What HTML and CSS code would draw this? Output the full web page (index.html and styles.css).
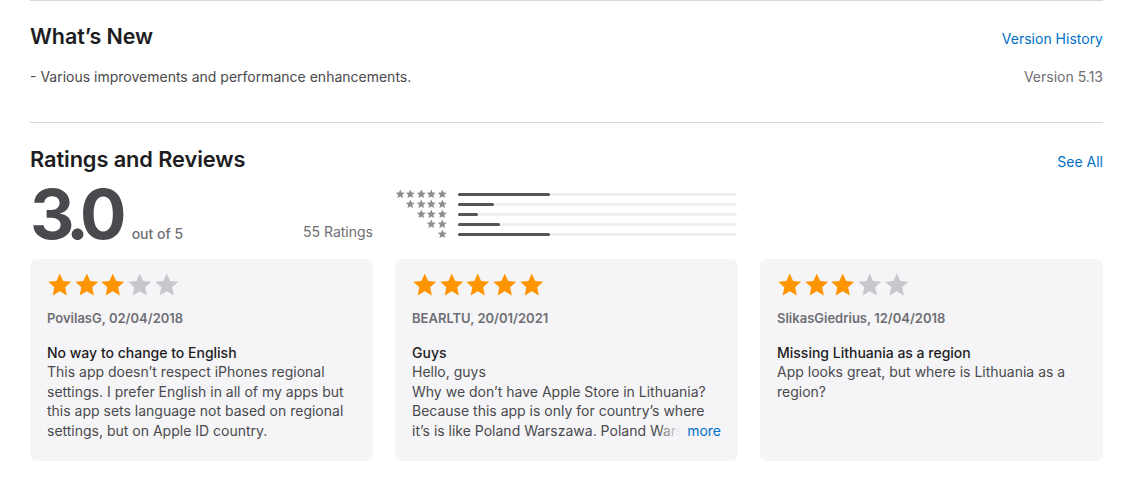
FILE: index.html
```html
<!DOCTYPE html>
<html>
<head>
<meta charset="utf-8">
<link rel="stylesheet" href="styles.css">
</head>
<body>
<svg width="0" height="0" class="defs">
  <defs>
    <symbol id="star" viewBox="0 0 24 24">
      <polygon points="12,1.2 15.2,8.2 22.8,9 17.1,14.2 18.7,21.8 12,17.9 5.3,21.8 6.9,14.2 1.2,9 8.8,8.2"/>
    </symbol>
  </defs>
</svg>
<main class="page">
  <section class="section whats-new">
    <div class="section-head">
      <h2 class="section-title">What’s New</h2>
      <a class="link">Version History</a>
    </div>
    <div class="notes-row">
      <p class="notes">- Various improvements and performance enhancements.</p>
      <p class="version">Version 5.13</p>
    </div>
  </section>

  <section class="section ratings">
    <div class="section-head ratings-head">
      <h2 class="section-title">Ratings and Reviews</h2>
      <a class="link">See All</a>
    </div>
    <div class="summary">
      <div class="score">
        <span class="score-num">3.0</span>
        <span class="score-out">out of 5</span>
      </div>
      <div class="count">55 Ratings</div>
      <div class="histogram">
        <div class="hrow"><span class="hstars"><svg><use href="#star"/></svg><svg><use href="#star"/></svg><svg><use href="#star"/></svg><svg><use href="#star"/></svg><svg><use href="#star"/></svg></span><span class="track"><span class="fill" style="width:33%"></span></span></div>
        <div class="hrow"><span class="hstars"><svg><use href="#star"/></svg><svg><use href="#star"/></svg><svg><use href="#star"/></svg><svg><use href="#star"/></svg></span><span class="track"><span class="fill" style="width:13%"></span></span></div>
        <div class="hrow"><span class="hstars"><svg><use href="#star"/></svg><svg><use href="#star"/></svg><svg><use href="#star"/></svg></span><span class="track"><span class="fill" style="width:7%"></span></span></div>
        <div class="hrow"><span class="hstars"><svg><use href="#star"/></svg><svg><use href="#star"/></svg></span><span class="track"><span class="fill" style="width:15%"></span></span></div>
        <div class="hrow"><span class="hstars"><svg><use href="#star"/></svg></span><span class="track"><span class="fill" style="width:33%"></span></span></div>
      </div>
    </div>

    <div class="reviews">
      <article class="card">
        <div class="stars">
          <svg class="on"><use href="#star"/></svg><svg class="on"><use href="#star"/></svg><svg class="on"><use href="#star"/></svg><svg class="off"><use href="#star"/></svg><svg class="off"><use href="#star"/></svg>
        </div>
        <div class="author">PovilasG, 02/04/2018</div>
        <h3 class="rtitle">No way to change to English</h3>
        <p class="rbody">This app doesn’t respect iPhones regional settings. I prefer English in all of my apps but this app sets language not based on regional settings, but on Apple ID country.</p>
      </article>
      <article class="card">
        <div class="stars">
          <svg class="on"><use href="#star"/></svg><svg class="on"><use href="#star"/></svg><svg class="on"><use href="#star"/></svg><svg class="on"><use href="#star"/></svg><svg class="on"><use href="#star"/></svg>
        </div>
        <div class="author">BEARLTU, 20/01/2021</div>
        <h3 class="rtitle">Guys</h3>
        <div class="clamp">
          <p class="rbody">Hello, guys<br>Why we don’t have Apple Store in Lithuania?<br>Because this app is only for country’s where it’s is like Poland Warszawa. Poland Warszawa Poland Warszawa and more text here</p>
          <a class="more">more</a>
        </div>
      </article>
      <article class="card">
        <div class="stars">
          <svg class="on"><use href="#star"/></svg><svg class="on"><use href="#star"/></svg><svg class="on"><use href="#star"/></svg><svg class="off"><use href="#star"/></svg><svg class="off"><use href="#star"/></svg>
        </div>
        <div class="author">SlikasGiedrius, 12/04/2018</div>
        <h3 class="rtitle">Missing Lithuania as a region</h3>
        <p class="rbody">App looks great, but where is Lithuania as a region?</p>
      </article>
    </div>
  </section>
</main>
</body>
</html>
```

FILE: styles.css
```css
* { box-sizing: border-box; }
html, body { margin: 0; padding: 0; background: #fff; }
body {
  font-family: Inter, "Noto Sans", "Liberation Sans", sans-serif;
  color: #1d1d1f;
  -webkit-font-smoothing: antialiased;
}
.defs { position: absolute; width: 0; height: 0; }
.page { width: 1073px; margin-left: 30px; }
.section { border-top: 1px solid #d8d8d8; }
.section-head {
  display: flex;
  justify-content: space-between;
  align-items: baseline;
  padding-top: 22px;
}
.section-title {
  margin: 0;
  font-size: 21.5px;
  line-height: 26px;
  font-weight: 600;
  letter-spacing: -0.1px;
  color: #1d1d1f;
}
.ratings .section-title { font-size: 21.8px; }
.link {
  font-size: 14px;
  color: #0070c9;
  cursor: pointer;
}
.notes-row {
  display: flex;
  justify-content: space-between;
  padding-top: 18px;
  padding-bottom: 35px;
}
.notes, .version {
  margin: 0;
  font-size: 14px;
  line-height: 20px;
  color: #4a4a4d;
}
.version { color: #6e6e73; }

.ratings-head { padding-top: 23px; }
.summary {
  display: flex;
  align-items: flex-start;
  height: 76px;
  margin-top: 11px;
}
.score {
  display: flex;
  align-items: baseline;
  width: 200px;
}
.score-num {
  font-size: 69px;
  line-height: 62px;
  font-weight: 700;
  letter-spacing: -7px;
  color: #4a4a4e;
}
.score-out {
  margin-left: 12px;
  font-size: 14px;
  font-weight: 500;
  color: #6e6e73;
}
.count {
  width: 143px;
  text-align: right;
  padding-top: 40px;
  font-size: 14px;
  color: #6e6e73;
}
.histogram {
  margin-left: 21px;
  padding-top: 6px;
  display: flex;
  flex-direction: column;
}
.hrow {
  display: flex;
  align-items: center;
  height: 10px;
}
.hstars {
  width: 53px;
  display: flex;
  justify-content: flex-end;
  fill: #8e8e93;
}
.hstars svg { width: 10.5px; height: 10px; }
.track {
  margin-left: 11px;
  width: 279px;
  height: 3px;
  background: #efeff2;
  border-radius: 2px;
  display: block;
}
.fill {
  display: block;
  height: 3px;
  background: #555558;
  border-radius: 2px;
}

.reviews {
  display: grid;
  grid-template-columns: repeat(3, 1fr);
  gap: 22px;
}
.card {
  background: #f5f5f7;
  border-radius: 7px;
  height: 202px;
  padding: 13px 17px 0 17px;
}
.stars { display: flex; gap: 1.2px; height: 27px; }
.stars svg { width: 25.5px; height: 26px; }
.stars .on { fill: #ff9500; }
.stars .off { fill: #c7c7cc; }
.author {
  margin-top: 10px;
  font-size: 13px;
  line-height: 18px;
  font-weight: 600;
  color: #6e6e73;
}
.rtitle {
  margin: 16px 0 0 0;
  font-size: 14px;
  line-height: 19px;
  font-weight: 500;
  color: #1d1d1f;
}
.rbody {
  margin: 0;
  font-size: 14px;
  line-height: 19.5px;
  color: #4a4a4d;
}
.clamp {
  position: relative;
  height: 78px;
  overflow: hidden;
}
.more {
  position: absolute;
  right: 0;
  bottom: 0;
  font-size: 14px;
  line-height: 19.5px;
  color: #0070c9;
  padding-left: 30px;
  background: linear-gradient(to right, rgba(245,245,247,0) 0, #f5f5f7 24px);
  cursor: pointer;
}
```
